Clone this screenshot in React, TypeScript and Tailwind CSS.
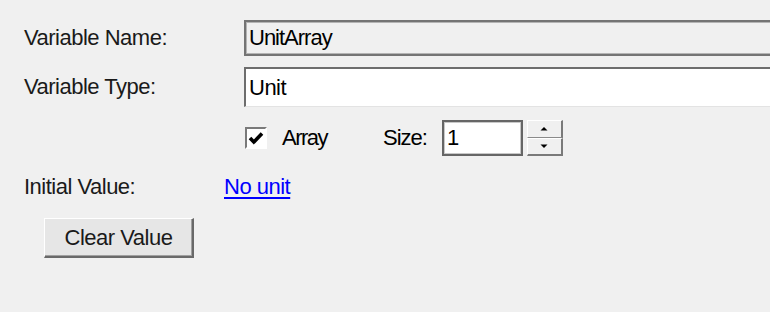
import React from "react";

function SpinArrow({ up }: { up?: boolean }) {
    return (
        <svg width="8" height="5" viewBox="0 0 8 5" className="block">
            <path d={up ? "M0.5 4.5 L4 1 L7.5 4.5 Z" : "M0.5 0.5 L4 4 L7.5 0.5 Z"} fill="#000" />
        </svg>
    );
}

export default function App() {
    return (
        <div className="w-[770px] h-[312px] overflow-hidden bg-[#f0f0f0] pt-[20px] font-['Liberation_Sans',Arial,sans-serif] text-[22px] leading-[26px] tracking-[-0.5px] text-black">
            {/* Variable name */}
            <div className="flex items-center">
                <div className="w-[244px] shrink-0 pl-[24px] text-[#1a1a1a]">Variable Name:</div>
                <div className="h-[36px] w-[600px] shrink-0 flex items-center border-2 border-[#747474] outline outline-1 outline-[#b4b4b4] -outline-offset-[3px] bg-[#f0f0f0] pl-[3px] tracking-[-1px]">
                    UnitArray
                </div>
            </div>

            {/* Variable type */}
            <div className="flex items-center mt-[11px]">
                <div className="w-[244px] shrink-0 pl-[24px] text-[#1a1a1a]">Variable Type:</div>
                <div className="h-[40px] w-[600px] shrink-0 flex items-center border-t-2 border-l-2 border-t-[#6d6d6d] border-l-[#6d6d6d] border-b border-b-[#e3e3e3] bg-white pl-[3px]">
                    Unit
                </div>
            </div>

            {/* Array / size */}
            <div className="flex items-center mt-[13px] pl-[245px] h-[36px]">
                <div className="w-[22px] h-[22px] flex items-center justify-center border-t-2 border-l-2 border-t-[#7a7a7a] border-l-[#7a7a7a] border-b-2 border-r-2 border-b-white border-r-white bg-white">
                    <svg width="16" height="14" viewBox="0 0 16 14">
                        <path d="M2 7 L5.8 11 L14 2.5" fill="none" stroke="#000" strokeWidth="3.6" />
                    </svg>
                </div>
                <span className="ml-[15px] tracking-[-1.5px]">Array</span>
                <span className="ml-[56px] tracking-[-1px]">Size:</span>
                <div className="ml-[15px] h-[36px] w-[81px] flex items-center border-2 border-[#666666] outline outline-1 outline-[#c8c8c8] -outline-offset-[3px] bg-white pl-[3px]">
                    1
                </div>
                <div className="ml-[4px] h-[36px] w-[36px] flex flex-col">
                    <div className="flex-1 flex items-center justify-center bg-[#f0f0f0] border-t border-l border-t-white border-l-white border-b border-r-2 border-b-[#8a8a8a] border-r-[#7a7a7a]">
                        <SpinArrow up />
                    </div>
                    <div className="flex-1 flex items-center justify-center bg-[#f0f0f0] border-t border-l border-t-white border-l-white border-b-2 border-r-2 border-b-[#7a7a7a] border-r-[#7a7a7a]">
                        <SpinArrow />
                    </div>
                </div>
            </div>

            {/* Initial value */}
            <div className="flex items-center mt-[18px]">
                <div className="w-[224px] shrink-0 pl-[24px] text-[#1a1a1a]">Initial Value:</div>
                <a className="text-[#0000ff] underline decoration-2 underline-offset-[3px] cursor-pointer">No unit</a>
            </div>

            {/* Clear button */}
            <div className="mt-[18px] pl-[44px]">
                <button className="w-[150px] h-[40px] flex items-center justify-center bg-[#e6e6e6] border-t border-l border-t-white border-l-white border-b-2 border-r-2 border-b-[#696969] border-r-[#696969] shadow-[inset_-1px_-1px_0_#a0a0a0] text-[#1a1a1a]">
                    Clear Value
                </button>
            </div>
        </div>
    );
}
